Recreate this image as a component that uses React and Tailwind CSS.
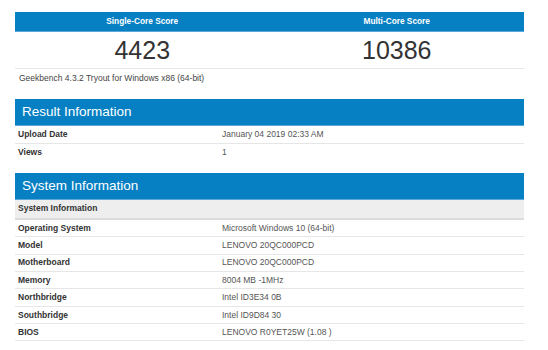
import React from 'react';

const systemRows = [
  ['Operating System', 'Microsoft Windows 10 (64-bit)'],
  ['Model', 'LENOVO 20QC000PCD'],
  ['Motherboard', 'LENOVO 20QC000PCD'],
  ['Memory', '8004 MB -1MHz'],
  ['Northbridge', 'Intel ID3E34 0B'],
  ['Southbridge', 'Intel ID9D84 30'],
  ['BIOS', 'LENOVO R0YET25W (1.08 )'],
];

function Row({ label, value }) {
  return (
    <div className="flex h-[17.4px] items-center border-b border-[#e6e6e6] text-[8.5px]">
      <div className="w-[207px] shrink-0 pl-[3px] font-bold text-[#333]">{label}</div>
      <div className="text-[#555]">{value}</div>
    </div>
  );
}

function SectionHeader({ title }) {
  return (
    <div className="flex h-[27px] items-center border-b border-[#5aa8d8] bg-[#0780c3] pl-[7px] text-[13.5px] text-white">
      {title}
    </div>
  );
}

export default function App() {
  return (
    <div className="h-[350px] w-[548px] bg-white" style={{ fontFamily: '"Liberation Sans", Arial, sans-serif' }}>
      <div className="ml-[15px] w-[509px] pt-[12px]">
        <div className="grid grid-cols-2 border-b border-[#5aa8d8] bg-[#0780c3] text-[8.3px] font-bold text-white">
          <div className="flex h-[19px] items-center justify-center">Single-Core Score</div>
          <div className="flex h-[19px] items-center justify-center">Multi-Core Score</div>
        </div>
        <div className="grid h-[37px] grid-cols-2 border-b border-[#e6e6e6] text-[25px] text-[#333]">
          <div className="flex items-center justify-center">4423</div>
          <div className="flex items-center justify-center">10386</div>
        </div>
        <div className="pl-[4px] pt-[3px] text-[8.5px] text-[#444]">Geekbench 4.3.2 Tryout for Windows x86 (64-bit)</div>

        <div className="mt-[14px]">
          <SectionHeader title="Result Information" />
          <div className="flex h-[18px] items-center border-b border-[#e6e6e6] text-[8.5px]">
            <div className="w-[207px] shrink-0 pl-[3px] font-bold text-[#333]">Upload Date</div>
            <div className="text-[#555]">January 04 2019 02:33 AM</div>
          </div>
          <div className="flex h-[17px] items-center text-[8.5px]">
            <div className="w-[207px] shrink-0 pl-[3px] font-bold text-[#333]">Views</div>
            <div className="text-[#555]">1</div>
          </div>
        </div>

        <div className="mt-[12px]">
          <SectionHeader title="System Information" />
          <div className="flex h-[20px] items-center border-b-2 border-[#dcdcdc] bg-[#eeeeee] pl-[3px] text-[8.5px] font-bold text-[#333]">
            System Information
          </div>
          {systemRows.map(([label, value]) => (
            <Row key={label} label={label} value={value} />
          ))}
        </div>
      </div>
    </div>
  );
}
